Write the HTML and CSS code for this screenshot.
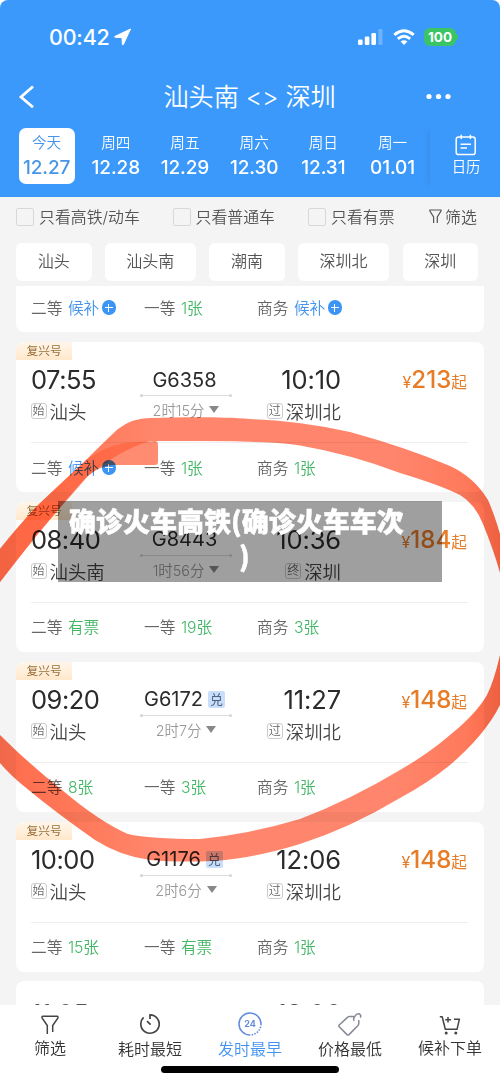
FILE: index.html
```html
<!DOCTYPE html>
<html lang="zh-CN">
<head>
<meta charset="utf-8">
<title>汕头南 - 深圳</title>
<link rel="stylesheet" href="styles.css">
</head>
<body>
<div class="phone">
  <header class="header">
    <div class="status">
      <span class="clock">00:42</span>
      <svg class="loc" width="18" height="18" viewBox="0 0 18 18"><path d="M16.5 1 L.9 8.4 Q.2 9.2 1.2 9.3 L8 9.6 L8.4 16.4 Q8.7 17.4 9.4 16.5 Z" fill="#fff" stroke="#fff" stroke-linejoin="round"/></svg>
      <svg class="signal" width="26" height="17" viewBox="0 0 26 17" fill="#fff"><rect x="0" y="10.5" width="4.6" height="5.5" rx="1.3"/><rect x="6.8" y="7.5" width="4.6" height="8.5" rx="1.3"/><rect x="13.4" y="4" width="4.6" height="12" rx="1.3"/><rect x="20.3" y="0" width="4.2" height="16" rx="1.3" opacity=".25"/></svg>
      <svg class="wifi" width="22" height="17" viewBox="0 0 22 17"><g fill="none" stroke="#fff" stroke-width="3"><path d="M1.3 5.9 Q11 -2.4 20.7 5.9"/><path d="M4.9 9.8 Q11 4.6 17.1 9.8"/></g><path d="M7.6 12.6 Q11 9.8 14.4 12.6 L11 16 Z" fill="#fff"/></svg>
      <span class="battery">100</span><i class="battery-cap"></i>
    </div>
    <div class="nav">
      <svg class="back" width="17" height="24" viewBox="0 0 17 24"><path d="M15 1.5 L3 12 L15 22.2" fill="none" stroke="#fff" stroke-width="2.8"/></svg>
      <h1 class="title">汕头南 &lt;&gt; 深圳</h1>
      <svg class="more" width="26" height="8" viewBox="0 0 26 8" fill="#fff"><circle cx="3" cy="3.5" r="2.6"/><circle cx="12.5" cy="3.5" r="2.6"/><circle cx="22" cy="3.5" r="2.6"/></svg>
    </div>
    <div class="dates">
      <div class="date date-on"><span>今天</span><b>12.27</b></div>
      <div class="date"><span>周四</span><b>12.28</b></div>
      <div class="date"><span>周五</span><b>12.29</b></div>
      <div class="date"><span>周六</span><b>12.30</b></div>
      <div class="date"><span>周日</span><b>12.31</b></div>
      <div class="date"><span>周一</span><b>01.01</b></div>
      <div class="calendar">
        <svg width="22" height="22" viewBox="0 0 22 22" fill="none" stroke="#fff" stroke-width="1.5"><rect x="1.2" y="3" width="19" height="17.6" rx="2.4"/><path d="M6.2 .7v4.3M15.4 .7v4.3M5.5 10.2h10.5M5.5 14h6.5"/></svg>
        <span>日历</span>
      </div>
    </div>
  </header>

  <div class="filters">
    <label class="check check-a"><i></i>只看高铁/动车</label>
    <label class="check check-b"><i></i>只看普通车</label>
    <label class="check check-c"><i></i>只看有票</label>
    <span class="filter"><svg width="13" height="15" viewBox="0 0 13 15" fill="none" stroke="#555" stroke-width="1.2"><path d="M4.6 14V8L.9 2V1H12v1L8.3 8v6"/></svg>筛选</span>
  </div>
  <div class="chips">
    <span class="chip">汕头</span><span class="chip chip-wide">汕头南</span><span class="chip">潮南</span><span class="chip chip-wide">深圳北</span><span class="chip">深圳</span>
  </div>

  <main class="list">
    <section class="card card-first">
      <div class="seats">
        <span>二等 <em class="wait">候补</em><i class="plus"></i></span><span>一等 <em>1张</em></span><span>商务 <em class="wait">候补</em><i class="plus"></i></span>
      </div>
    </section>

    <section class="card">
      <div class="tag">复兴号</div>
      <div class="trip">
        <div class="from"><div class="time">07:55</div><div class="station"><i>始</i>汕头</div></div>
        <div class="train"><div class="number">G6358</div><div class="rule"></div><div class="length">2时15分<i></i></div></div>
        <div class="to"><div class="time">10:10</div><div class="station"><i>过</i>深圳北</div></div>
        <div class="price"><small>¥</small>213<span>起</span></div>
      </div>
      <div class="seats"><span>二等 <em class="wait">候补</em><i class="plus"></i></span><span>一等 <em>1张</em></span><span>商务 <em>1张</em></span></div>
    </section>

    <section class="card">
      <div class="tag">复兴号</div>
      <div class="trip">
        <div class="from"><div class="time">08:40</div><div class="station"><i>始</i>汕头南</div></div>
        <div class="train"><div class="number">G8443</div><div class="rule"></div><div class="length">1时56分<i></i></div></div>
        <div class="to"><div class="time">10:36</div><div class="station"><i>终</i>深圳</div></div>
        <div class="price"><small>¥</small>184<span>起</span></div>
      </div>
      <div class="seats"><span>二等 <em>有票</em></span><span>一等 <em>19张</em></span><span>商务 <em>3张</em></span></div>
    </section>

    <section class="card">
      <div class="tag">复兴号</div>
      <div class="trip">
        <div class="from"><div class="time">09:20</div><div class="station"><i>始</i>汕头</div></div>
        <div class="train"><div class="number">G6172<i>兑</i></div><div class="rule"></div><div class="length">2时7分<i></i></div></div>
        <div class="to"><div class="time">11:27</div><div class="station"><i>过</i>深圳北</div></div>
        <div class="price"><small>¥</small>148<span>起</span></div>
      </div>
      <div class="seats"><span>二等 <em>8张</em></span><span>一等 <em>3张</em></span><span>商务 <em>1张</em></span></div>
    </section>

    <section class="card">
      <div class="tag">复兴号</div>
      <div class="trip">
        <div class="from"><div class="time">10:00</div><div class="station"><i>始</i>汕头</div></div>
        <div class="train"><div class="number">G1176<i>兑</i></div><div class="rule"></div><div class="length">2时6分<i></i></div></div>
        <div class="to"><div class="time">12:06</div><div class="station"><i>过</i>深圳北</div></div>
        <div class="price"><small>¥</small>148<span>起</span></div>
      </div>
      <div class="seats"><span>二等 <em>15张</em></span><span>一等 <em>有票</em></span><span>商务 <em>1张</em></span></div>
    </section>

    <section class="card card-last">
      <div class="trip">
        <div class="from"><div class="time">11:05</div></div>
        <div class="train"><div class="number"><i></i></div></div>
        <div class="to"><div class="time">13:06</div></div>
      </div>
    </section>
  </main>

  <nav class="tabs">
    <div class="tab tab-up"><svg width="18" height="20" viewBox="0 0 18 20" fill="none" stroke="#444" stroke-width="1.5"><path d="M6.3 19V10.5L1.2 3.2Q.5 1.2 2 1.2H16Q17.5 1.2 16.8 3.2L11.7 10.5V17"/></svg><span>筛选</span></div>
    <div class="tab"><svg width="22" height="22" viewBox="0 0 22 22" fill="none" stroke="#444" stroke-width="1.7"><path d="M11 6V1.8A9.2 9.2 0 1 1 4.6 4.4M8 8.2l3.6 3.4"/></svg><span>耗时最短</span></div>
    <div class="tab tab-on"><svg width="24" height="24" viewBox="0 0 24 24" fill="none" stroke="#628be0" stroke-width="1.5"><path d="M12 23A11 11 0 1 1 23 12"/><path d="M23 12A11 11 0 0 1 12 23" stroke-dasharray="1.5 1.3"/><text x="12" y="15.2" text-anchor="middle" class="day">24</text></svg><span>发时最早</span></div>
    <div class="tab"><svg width="26" height="24" viewBox="0 0 26 24" fill="none" stroke="#858993" stroke-width="1.5" stroke-linejoin="round"><path d="M17.8 4.5H12.2Q11 4.6 10.2 5.6L2.2 13Q1.4 14 2.2 14.8L10 22.6Q11 23.5 12 22.6L21 13.5Q21.8 12.5 21.8 11.5V8M17.2 8.7Q15.8 6.7 17.8 4.5Q19.7 1 22.3 1.8Q24.6 3 23.3 5.6"/></svg><span>价格最低</span></div>
    <div class="tab tab-up"><svg width="22" height="20" viewBox="0 0 22 20" fill="none" stroke="#444" stroke-width="1.5" stroke-linejoin="round"><path d="M.8 1.8H3.2L6.3 14.3H18L20.4 4.2H15M6.3 4.8H12M9 2V7.6"/><g fill="#444" stroke="none"><circle cx="7.2" cy="18" r="1.5"/><circle cx="16.8" cy="18" r="1.5"/></g></svg><span>候补下单</span></div>
    <i class="home"></i>
  </nav>

  <svg class="marker" width="500" height="1083" viewBox="0 0 500 1083">
    <defs>
      <linearGradient id="ink" gradientUnits="userSpaceOnUse" x1="0" y1="0" x2="500" y2="0">
        <stop offset="0" stop-color="#fc6c4c"/><stop offset=".12" stop-color="#ff7656"/><stop offset=".32" stop-color="#ff866c"/><stop offset=".78" stop-color="#ff866c"/><stop offset=".93" stop-color="#ff7a5c"/><stop offset="1" stop-color="#f96442"/>
      </linearGradient>
    </defs>
    <path fill="url(#ink)" fill-rule="evenodd" d="M-30 590C-10 560 15 529 37 506Q62 482 85 461Q108 438 118 429Q132 418 150 418C190 417 225 417 250 419Q302 421 350 432Q405 447 450 466Q474 477 488 500Q496 518 503 545Q540 630 500 705Q485 735 450 765Q428 783 400 798Q350 828 300 844Q245 861 200 861.5Q172 862 150 860Q120 856 95 840Q55 812 25 787Q10 775 0 763L-30 730Z
      M-30 620V705Q-15 718 0 735C20 755 40 772 62 790Q100 822 128 834Q150 839 200 839Q250 834 300 819Q350 800 400 770Q428 754 450 735Q476 714 487 695Q494 681 500 655L530 610L500 573Q494 551 483 524Q475 504 460 495Q440 485 400 473Q350 454 300 445.5Q275 441 200 441H150Q120 450 88 476Q62 505 37 535Q18 558 0 582Z"/>
    <path fill="#ff6542" fill-opacity=".75" d="M155 441Q158 441 158 445V462Q158 465 155 465H112Q100 466 86 477Q62 503 37 535L0 582V550Q18 527 37 506Q65 481 85 461Q105 446 125 443Z"/>
  </svg>
  <div class="caption"><p>确诊火车高铁(确诊火车车次</p><p class="caption-end">)</p></div>
</div>
</body>
</html>
```
FILE: styles.css
```css
* { box-sizing: border-box; }
body { margin: 0; background: #fff; }
i, em { font-style: normal; }
svg { display: block; flex: none; }

.phone {
  position: relative;
  width: 500px;
  height: 1083px;
  display: flex;
  flex-direction: column;
  overflow: hidden;
  isolation: isolate;
  background: #f4f4f4;
  border-radius: 8px 8px 0 0;
  font-family: Inter, "Noto Sans CJK SC", sans-serif;
  color: #333;
  white-space: nowrap;
}

/* header */
.header { height: 197px; flex: none; background: #3c99fc; color: #fff; }
.status { height: 72px; padding: 2px 0 0 49px; display: flex; align-items: center; }
.clock { width: 65px; font-size: 21.5px; font-weight: 500; letter-spacing: -.2px; }
.loc { margin-right: 226px; }
.signal { margin-right: 9px; }
.wifi { margin-right: 9px; }
.battery { width: 32px; height: 18px; border-radius: 6px; background: #39c466; font-size: 13.5px; line-height: 18px; font-weight: 700; text-align: center; }
.battery-cap { width: 2px; height: 6px; border-radius: 0 2px 2px 0; background: #39c466; }
.nav { height: 50px; padding: 0 48px 0 18px; display: flex; align-items: center; }
.title { flex: 1; margin: 0; padding-left: 128.5px; font-size: 25.2px; line-height: 48px; font-weight: 350; letter-spacing: -.1px; }
.dates { height: 63px; margin-top: 6px; padding-left: 12px; display: flex; }
.date { width: 56px; height: 56px; margin: 0 6.6px; border-radius: 7px; display: flex; flex-direction: column; align-items: center; }
.date span { font-size: 14.6px; line-height: 22px; padding-top: 4px; height: 26px; font-weight: 350; }
.date b { font-size: 19px; line-height: 27px; font-weight: 450; letter-spacing: -.1px; }
.date-on { background: #fff; color: #4795e9; }
.calendar { flex: 1; margin-left: 3px; height: 60px; padding: 6px 0 0 2px; display: flex; flex-direction: column; align-items: center; background: #3c99fc; box-shadow: -5px 0 5px -3px #398fe9; }
.calendar span { font-size: 14.4px; line-height: 22px; font-weight: 350; }

/* filters */
.filters { height: 46px; flex: none; padding: 0 22px 7px 16px; display: flex; align-items: center; color: #555; font-size: 15.9px; font-weight: 350; }
.check { display: flex; align-items: center; }
.check i { width: 18px; height: 18px; margin-right: 5px; border: 1px solid #d8d8d8; border-radius: 2px; }
.check-a { width: 156.5px; }
.check-b { width: 135.5px; }
.check-c { width: 121px; }
.filter { display: flex; align-items: center; gap: 3px; }
.chips { flex: none; height: 43px; padding: 0 22px 5px 16px; display: flex; justify-content: space-between; font-size: 16px; color: #555; font-weight: 350; }
.chip { width: 75.5px; height: 38px; line-height: 37px; border-radius: 6px; background: #fff; text-align: center; }
.chip-wide { width: 91.5px; }

/* train cards */
.list { flex: none; height: 719px; padding: 0 16px; overflow: hidden; display: flex; flex-direction: column; gap: 9.8px; }
.card { flex: none; height: 150px; background: #fff; border-radius: 8px; overflow: hidden; }
.card-first { height: 46.4px; border-radius: 0 0 8px 8px; }
.tag { width: 56px; height: 18px; padding-left: 10.5px; background: linear-gradient(#fff6ea, #ffe8cc); color: #98713a; font-size: 11.8px; line-height: 18px; }
.trip { height: 82px; padding: 0 17px 0 15px; display: grid; grid-template-columns: 109px 92px 1fr 126px; }
.time { height: 40px; font-size: 25.5px; line-height: 40px; letter-spacing: -.5px; color: #2b2b2b; font-weight: 430; }
.station { height: 22px; display: flex; align-items: center; font-size: 18.4px; font-weight: 350; color: #444; }
.station i { width: 16px; height: 16px; margin: 0 3px 0 0; border: 1px solid #ccc; border-radius: 3px; font-size: 12px; line-height: 13px; text-align: center; color: #666; }
.from .station { margin-left: -.5px; }
.to { display: flex; flex-direction: column; align-items: flex-end; }
.to .time { letter-spacing: -.1px; }
.train { display: flex; flex-direction: column; align-items: center; }
.number { height: 35px; display: flex; align-items: center; gap: 5px; margin-right: 3px; font-size: 20px; padding-top: 4px; color: #2b2b2b; }
.number i { width: 17px; height: 17px; border-radius: 2px; background: #c8defa; color: #4c637f; font-size: 13px; line-height: 16px; text-align: center; }
.rule { position: relative; width: 90px; height: 1px; background: #ddd; }
.rule::before, .rule::after { content: ""; position: absolute; top: -1px; width: 3px; height: 3px; border-radius: 50%; background: #d5d5d5; }
.rule::before { left: -1px; }
.rule::after { right: -1px; }
.length { height: 27px; display: flex; align-items: center; gap: 5px; font-size: 14.4px; color: #999; font-weight: 350; }
.length i { border: 5px solid transparent; border-top: 7px solid #888; border-bottom: 0; }
.price { text-align: right; font-size: 24.1px; line-height: 40px; font-weight: 500; color: #e87b26; }
.price small { font-size: 16px; font-weight: 400; }
.price span { font-size: 15.7px; font-weight: 400; }
.seats { height: 50px; margin: 0 16px 0 15px; padding-bottom: 1px; border-top: 1px solid #eee; display: grid; grid-template-columns: 113px 113px 1fr; color: #666; font-size: 15.7px; font-weight: 350; }
.card-first .seats { height: 43px; border: 0; }
.seats > span { display: flex; align-items: center; gap: 5.5px; }
.seats em { color: #43b766; }
.seats .wait { color: #4394ec; }
.plus { width: 14.5px; height: 14.5px; margin: 1px 0 0 -3px; border-radius: 50%; background: linear-gradient(#fff, #fff) center / 8px 1.4px no-repeat, linear-gradient(#fff, #fff) center / 1.4px 8px no-repeat, #3c95f5; }
.card-last .trip { padding-top: 13px; }
.card-last .time { color: #555; }
.card-last .number i { opacity: .6; }

/* bottom tabs */
.tabs { position: relative; flex: none; height: 78px; padding-top: 7px; background: #fff; display: grid; grid-template-columns: repeat(5, 100px); }
.tab { height: 50px; display: flex; flex-direction: column; align-items: center; font-size: 16px; line-height: 24px; color: #333; }
.tab svg { height: 24px; }
.tab span { margin-top: 1px; font-weight: 350; }
.tab-up svg { height: 20px; margin-top: 3px; }
.tab-on { color: #4394f0; }
.day { font: 700 9px Inter, sans-serif; fill: #628be0; stroke: none; }
.home { position: absolute; left: 161px; top: 61px; width: 178px; height: 7px; border-radius: 4px; background: #000; }

/* marker stroke and caption lie over the list */
.marker { position: absolute; left: 0; top: 0; mix-blend-mode: multiply; pointer-events: none; }
.caption { position: absolute; left: 58px; top: 501px; width: 384px; height: 81px; padding: 2px 10px 0 11px; background: rgba(0, 0, 0, .375); color: #fff; font: 900 27px/35px "Noto Sans CJK SC", sans-serif; -webkit-text-stroke: .5px #fff; }
.caption p { margin: 0; }
.caption .caption-end { padding-left: 170px; }
```
